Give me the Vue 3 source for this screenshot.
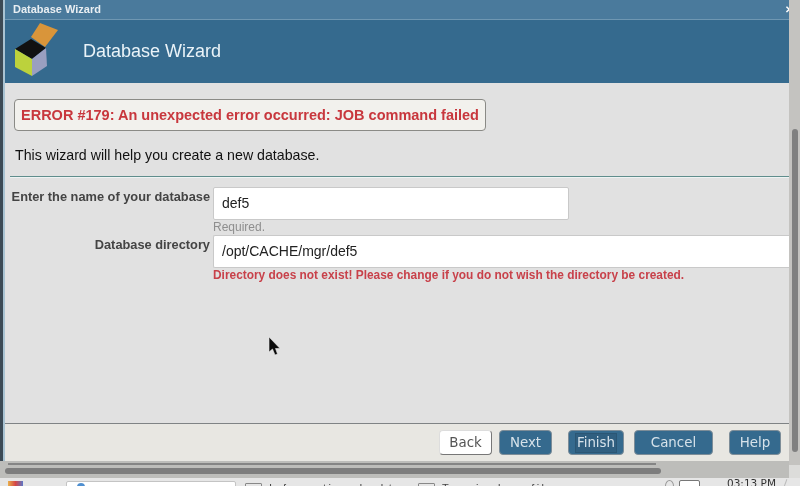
<script setup>
const buttons = [
  { label: 'Back', cls: 'back' },
  { label: 'Next', cls: 'next' },
  { label: 'Finish', cls: 'finish' },
  { label: 'Cancel', cls: 'cancel' },
  { label: 'Help', cls: 'help' }
]
</script>

<template>
  <div class="screen">
    <div class="main">
      <div class="edge"></div>
      <div class="window">
        <div class="titlebar">
          <span>Database Wizard</span>
          <span class="close">✕</span>
        </div>
        <div class="banner">
          <svg class="logo" width="46" height="56" viewBox="0 0 46 56">
            <polygon points="26,1 44,8 31,25 17,15" fill="#d9953a" />
            <polygon points="1,27 17,17 32,26 18,37" fill="#111111" />
            <polygon points="1,27 18,37 18,54 1,45" fill="#bcd23c" />
            <polygon points="18,37 32,26 33,44 18,54" fill="#9a9fc0" />
          </svg>
          <div class="banner-title">Database Wizard</div>
        </div>
        <div class="content">
          <div class="error-box">ERROR #179: An unexpected error occurred: JOB command failed</div>
          <div class="intro">This wizard will help you create a new database.</div>
          <div class="rule"></div>
          <div class="form">
            <label class="label">Enter the name of your database</label>
            <div class="field">
              <input class="input short" value="def5" />
              <div class="hint">Required.</div>
            </div>
            <label class="label">Database directory</label>
            <div class="field">
              <input class="input long" value="/opt/CACHE/mgr/def5" />
              <div class="warn">Directory does not exist! Please change if you do not wish the directory be created.</div>
            </div>
          </div>
        </div>
        <div class="footer">
          <button v-for="b in buttons" :key="b.label" class="btn" :class="b.cls">
            <span class="btn-text">{{ b.label }}</span>
          </button>
        </div>
      </div>
      <div class="vscroll"><div class="vthumb"></div></div>
      <svg class="cursor" width="14" height="22" viewBox="0 0 14 22">
        <path d="M1 1 L1 16 L4.5 13 L7 19 L9.5 18 L7.5 12.5 L12 12.5 Z" fill="#0a0a0a" stroke="#e8e8e8" stroke-width=".6" />
      </svg>
    </div>
    <div class="hbar">
      <div class="htrack">
        <div class="hline"></div>
        <div class="hthumb"></div>
      </div>
      <div class="corner"></div>
    </div>
    <div class="taskbar">
      <div class="start"></div>
      <div class="search"><span class="search-icon"></span></div>
      <div class="tasks">
        <span class="task-box"></span><span class="task-text">Information desktop</span>
      </div>
      <div class="tasks second">
        <span class="task-box"></span><span class="task-text">Terminal profile</span>
      </div>
      <div class="tray">
        <span class="tray-icon"></span>
        <span class="tray-box"></span>
      </div>
      <div class="clock">03:13 PM</div>
      <div class="sep"></div>
    </div>
  </div>
</template>

<style>
html, body { margin: 0; padding: 0; background: #e8e7e2; overflow: hidden; }
</style>

<style scoped>
.screen {
  width: 800px;
  height: 486px;
  overflow: hidden;
  display: flex;
  flex-direction: column;
  font-family: "Liberation Sans", Arial, sans-serif;
  filter: blur(0.45px);
}
.main {
  position: relative;
  height: 461px;
  display: flex;
  flex: none;
}
.edge { width: 5px; background: linear-gradient(90deg, #3c4a55 0 3px, #a9c3d2 3px 5px); flex: none; }
.window { width: 784px; display: flex; flex-direction: column; background: #e1e1e1; flex: none; }
.titlebar {
  height: 19px;
  flex: none;
  background: #4a7a9c;
  border-bottom: 1px solid #6f97b2;
  color: #e9eef2;
  font-size: 11px;
  font-weight: bold;
  line-height: 19px;
  padding-left: 8px;
  display: flex;
  justify-content: space-between;
}
.close { font-size: 10px; margin-right: -4px; color: #fff; }
.banner {
  height: 63px;
  flex: none;
  background: #356a8e;
  display: flex;
  align-items: flex-start;
  padding-left: 9px;
  gap: 23px;
}
.logo { margin-top: 2px; flex: none; }
.banner-title { color: #eaf3f8; font-size: 18px; line-height: 22px; margin-top: 20px; }
.content { flex: 1; padding: 16px 0 0 5px; }
.error-box {
  display: block;
  height: 32px;
  box-sizing: border-box;
  width: 472px;
  margin-left: 4px;
  border: 1px solid #8a8a86;
  border-radius: 4px;
  background: #f2f1ed;
  color: #c8373d;
  font-size: 14.5px;
  font-weight: bold;
  line-height: 30px;
  padding-left: 6px;
  white-space: nowrap;
}
.intro { margin: 16px 0 0 5px; font-size: 14.2px; line-height: 17px; color: #111; }
.rule { margin: 12px 0 0 0; height: 1px; background: #5f8d8c; box-shadow: 0 1px 0 #eef3f3; }
.form {
  display: grid;
  grid-template-columns: 200px 1fr;
  column-gap: 3px;
  margin-top: 10px;
}
.label {
  font-size: 12.8px;
  font-weight: bold;
  color: #444;
  text-align: right;
  line-height: 20px;
  white-space: nowrap;
}
.field { min-width: 0; }
.input {
  display: block;
  box-sizing: border-box;
  height: 33px;
  background: #fff;
  border: 1px solid #c9c9c9;
  border-radius: 2px;
  padding: 0 8px 2px;
  font-family: "Liberation Sans", Arial, sans-serif;
  font-size: 14px;
  color: #222;
  outline: none;
}
.input.short { width: 356px; }
.input.long { width: 576px; border-right: none; border-radius: 2px 0 0 2px; }
.hint { font-size: 12px; color: #8e8e8e; line-height: 15px; height: 15px; }
.warn { font-size: 11.9px; font-weight: bold; color: #c8414a; line-height: 15px; white-space: nowrap; }
.footer {
  height: 37px;
  flex: none;
  background: #e8e7e2;
  border-top: 1px solid #7f8385;
  display: flex;
  align-items: center;
}
.btn {
  height: 25px;
  box-sizing: border-box;
  padding: 0;
  border: 1px solid #7d8d98;
  border-radius: 4px;
  background: #356a8e;
  color: #d6e2ea;
  font-family: "DejaVu Sans", sans-serif;
  font-size: 13.4px;
  display: flex;
  align-items: center;
  justify-content: center;
  flex: none;
}
.btn-text { line-height: 18px; }
.back { width: 53px; margin-left: 434px; background: #fff; color: #555; border-color: #ddd #777 #777 #ddd; }
.next { width: 53px; margin-left: 7px; }
.finish { width: 56px; margin-left: 16px; }
.finish .btn-text { outline: 1px solid #2b5674; padding: 0 1px; background: #305f80; }
.cancel { width: 79px; margin-left: 10px; }
.help { width: 52px; margin-left: 16px; }
.vscroll { width: 11px; background: #c4c3c0; flex: none; }
.vthumb { width: 6px; height: 323px; margin: 129px 0 0 3px; background: #808080; border-radius: 3px; }
.cursor { position: absolute; left: 268px; top: 336px; }
.hbar { height: 17px; flex: none; display: flex; }
.htrack { width: 789px; background: #bdbdba; padding-top: 2px; box-sizing: border-box; flex: none; }
.hline { width: 648px; height: 2px; margin-left: 8px; background: #858585; }
.hthumb { width: 656px; height: 6px; margin: 3px 0 0 5px; background: #7d7d7d; border-radius: 3px; }
.corner { flex: 1; background: linear-gradient(180deg, #c4c3c0 0 4px, #dcdcda 4px); }
.taskbar {
  height: 8px;
  flex: none;
  background: #e6e6e6;
  position: relative;
  overflow: hidden;
  font-size: 11px;
  color: #444;
}
.start { position: absolute; left: 8px; top: 3px; width: 15px; height: 8px; background: linear-gradient(90deg, #e9b04a, #d64646, #5a77c9); }
.search { position: absolute; left: 66px; top: 3px; width: 168px; height: 12px; background: #fff; border: 1px solid #c4c4c4; border-radius: 2px; }
.search-icon { position: absolute; left: 10px; top: 1px; width: 8px; height: 8px; border-radius: 50%; background: #4f8fd0; }
.tasks { position: absolute; left: 245px; top: 5px; display: flex; gap: 7px; }
.tasks.second { left: 418px; }
.task-box { width: 15px; height: 10px; border: 1px solid #888; border-radius: 1px; flex: none; }
.task-text { font-size: 11px; line-height: 11px; letter-spacing: 2.4px; white-space: nowrap; }
.tray { position: absolute; left: 665px; top: 2px; display: flex; gap: 5px; }
.tray-icon { width: 7px; height: 10px; border: 1px solid #999; border-radius: 50%; }
.tray-box { width: 19px; height: 10px; border: 1px solid #777; border-radius: 2px; background: #fff; }
.clock { position: absolute; left: 727px; top: -1px; font-family: "DejaVu Sans", sans-serif; font-size: 10.5px; line-height: 12px; color: #333; white-space: nowrap; }
.sep { position: absolute; left: 785px; top: 1px; width: 1px; height: 8px; background: #bbb; transform: rotate(20deg); }
</style>
